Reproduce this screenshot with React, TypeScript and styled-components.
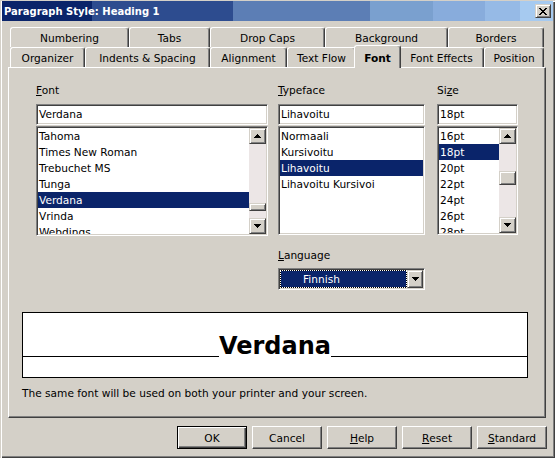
import styled, { createGlobalStyle, css } from "styled-components";

const GlobalStyle = createGlobalStyle`
  html, body {
    margin: 0;
    padding: 0;
    background: #d4d0c8;
  }
`;

const NAVY = "#0a246a";

const raised = css`
  box-sizing: border-box;
  border: 1px solid;
  border-color: #d4d0c8 #404040 #404040 #d4d0c8;
  box-shadow: inset 1px 1px 0 #ffffff, inset -1px -1px 0 #808080;
  background: #d4d0c8;
`;

const sunken = css`
  box-sizing: border-box;
  border: 1px solid;
  border-color: #808080 #ffffff #ffffff #808080;
  padding: 1px;
  box-shadow: inset 1px 1px 0 #404040, inset -1px -1px 0 #d4d0c8;
  background: #ffffff;
`;

const Window = styled.div`
  width: 555px;
  height: 458px;
  box-sizing: border-box;
  padding: 1px 2px 2px;
  background: #d4d0c8;
  box-shadow: inset 1px 1px 0 #d4d0c8, inset 2px 2px 0 #ffffff,
    inset -1px -1px 0 #404040, inset -2px -2px 0 #808080;
  display: flex;
  flex-direction: column;
  font-family: "DejaVu Sans", "Liberation Sans", sans-serif;
  font-size: 10.6px;
  color: #000;
  overflow: hidden;
`;

const TitleBar = styled.div`
  height: 20px;
  flex-shrink: 0;
  display: flex;
  align-items: center;
  justify-content: space-between;
  padding: 0 2px 0 2px;
  color: #fff;
  font-weight: bold;
  font-size: 10px;
  background: linear-gradient(
    to right,
    #0a246a 0 90px,
    #2d4c8f 90px 231px,
    #5c7eb5 231px 368px,
    #7aa0cf 368px 431px,
    #88acdc 431px 483px,
    #96bae6 483px 518px,
    #a6caf0 518px
  );
`;

const CloseButton = styled.div`
  ${raised};
  width: 16px;
  height: 14px;
  display: flex;
  align-items: center;
  justify-content: center;
`;

const TabStrip = styled.div`
  margin: 6px 0 0 8px;
  display: flex;
  flex-direction: column;
`;

const TabRow = styled.div`
  display: flex;
  height: 20px;
`;

const Tab = styled.div<{ $w: number; $active?: boolean }>`
  box-sizing: border-box;
  width: ${(p) => p.$w}px;
  height: 20px;
  flex-shrink: 0;
  display: flex;
  align-items: center;
  justify-content: center;
  padding-top: 1px;
  white-space: nowrap;
  background: #d4d0c8;
  border-top: 1px solid #ffffff;
  border-left: 1px solid #ffffff;
  border-right: 1px solid #404040;
  border-radius: 3px 3px 0 0;
  box-shadow: inset -1px 0 0 #808080;
  ${(p) =>
    p.$active &&
    css`
      width: ${p.$w + 4}px;
      height: 23px;
      margin: -2px -2px 0;
      position: relative;
      z-index: 1;
      font-weight: bold;
    `}
`;

const Page = styled.div`
  box-sizing: border-box;
  margin-left: 6px;
  width: 538px;
  height: 351px;
  flex-shrink: 0;
  border-top: 1px solid #ffffff;
  border-left: 1px solid #ffffff;
  border-right: 1px solid #404040;
  border-bottom: 1px solid #404040;
  box-shadow: inset -1px -1px 0 #808080;
  display: flex;
  flex-direction: column;
  padding: 14px 0 0 13px;
`;

const FieldsRow = styled.div`
  display: flex;
  align-items: flex-start;
  margin-left: 14px;
`;

const Column = styled.div<{ $w: number; $gap?: number }>`
  width: ${(p) => p.$w}px;
  margin-right: ${(p) => p.$gap ?? 0}px;
  display: flex;
  flex-direction: column;
`;

const Label = styled.div<{ $top?: number }>`
  height: 16px;
  line-height: 16px;
  margin-top: ${(p) => p.$top ?? 0}px;
`;

const TextField = styled.div`
  ${sunken};
  margin-top: 6px;
  height: 21px;
  line-height: 17px;
  padding-left: 2px;
  white-space: nowrap;
`;

const ListBox = styled.div<{ $h: number }>`
  ${sunken};
  margin-top: 1px;
  height: ${(p) => p.$h}px;
  display: flex;
  overflow: hidden;
`;

const Items = styled.div`
  flex: 1;
  min-width: 0;
  overflow: hidden;
  display: flex;
  flex-direction: column;
`;

const Item = styled.div<{ $sel?: boolean }>`
  height: 16px;
  line-height: 16px;
  flex-shrink: 0;
  padding-left: 1px;
  white-space: nowrap;
  background: ${(p) => (p.$sel ? NAVY : "transparent")};
  color: ${(p) => (p.$sel ? "#fff" : "#000")};
`;

const ScrollBar = styled.div`
  width: 17px;
  flex-shrink: 0;
  display: flex;
  flex-direction: column;
  background: #ece6e6;
`;

const ScrollArrow = styled.div`
  ${raised};
  height: 16px;
  flex-shrink: 0;
  display: flex;
  align-items: center;
  justify-content: center;
`;

const Track = styled.div<{ $offset: number }>`
  flex: 1;
  padding-top: ${(p) => p.$offset}px;
`;

const Thumb = styled.div<{ $h: number }>`
  ${raised};
  height: ${(p) => p.$h}px;
`;

const Dropdown = styled.div`
  ${sunken};
  margin-top: 5px;
  height: 22px;
  display: flex;
`;

const DropValue = styled.div`
  flex: 1;
  background: #000;
  display: flex;
`;

const DropFocus = styled.div`
  flex: 1;
  border: 1px dotted #ffffff;
  background: ${NAVY};
  background-clip: padding-box;
  color: #fff;
  line-height: 16px;
  padding-left: 22px;
`;

const DropButton = styled.div`
  ${raised};
  width: 16px;
  display: flex;
  align-items: center;
  justify-content: center;
`;

const PreviewBox = styled.div`
  box-sizing: border-box;
  margin-top: 22px;
  width: 506px;
  height: 66px;
  border: 1px solid #000;
  background: #fff;
`;

const PreviewRow = styled.div`
  display: flex;
  align-items: flex-end;
  height: 44px;
`;

const Rule = styled.div`
  flex: 1;
  height: 1px;
  background: #000;
`;

const PreviewWord = styled.div`
  font-family: "DejaVu Sans", sans-serif;
  font-weight: bold;
  font-size: 24px;
  line-height: 24px;
  margin-bottom: -1px;
`;

const Note = styled.div`
  margin-top: 7px;
  line-height: 16px;
`;

const ButtonBar = styled.div`
  margin-top: 8px;
  display: flex;
  justify-content: flex-end;
  gap: 5px;
  padding-right: 6px;
`;

const DialogButton = styled.div<{ $default?: boolean }>`
  box-sizing: border-box;
  width: 70px;
  height: 23px;
  display: flex;
  align-items: center;
  justify-content: center;
  border: 1px solid;
  border-color: #ffffff #404040 #404040 #ffffff;
  box-shadow: inset -1px -1px 0 #808080;
  ${(p) =>
    p.$default &&
    css`
      border-color: #000;
      box-shadow: inset 1px 1px 0 #ffffff, inset -1px -1px 0 #404040,
        inset -2px -2px 0 #808080;
    `}
`;

const Arrow = ({ down }: { down?: boolean }) => (
  <svg width="7" height="4" viewBox="0 0 7 4" shapeRendering="crispEdges">
    <g transform={down ? "matrix(1 0 0 -1 0 4)" : undefined} fill="#000">
      <rect x="3" y="0" width="1" height="1" />
      <rect x="2" y="1" width="3" height="1" />
      <rect x="1" y="2" width="5" height="1" />
      <rect x="0" y="3" width="7" height="1" />
    </g>
  </svg>
);

const CloseGlyph = () => (
  <svg width="8" height="7" viewBox="0 0 8 7" shapeRendering="crispEdges" fill="#000">
    <rect x="0" y="0" width="2" height="1" />
    <rect x="6" y="0" width="2" height="1" />
    <rect x="1" y="1" width="2" height="1" />
    <rect x="5" y="1" width="2" height="1" />
    <rect x="2" y="2" width="4" height="1" />
    <rect x="3" y="3" width="2" height="1" />
    <rect x="2" y="4" width="4" height="1" />
    <rect x="1" y="5" width="2" height="1" />
    <rect x="5" y="5" width="2" height="1" />
    <rect x="0" y="6" width="2" height="1" />
    <rect x="6" y="6" width="2" height="1" />
  </svg>
);

interface PickListProps {
  items: string[];
  selected: string;
  height: number;
  thumb?: { offset: number; size: number };
}

const PickList = ({ items, selected, height, thumb }: PickListProps) => (
  <ListBox $h={height}>
    <Items>
      {items.map((it) => (
        <Item key={it} $sel={it === selected}>
          {it}
        </Item>
      ))}
    </Items>
    {thumb && (
      <ScrollBar>
        <ScrollArrow>
          <Arrow />
        </ScrollArrow>
        <Track $offset={thumb.offset}>
          <Thumb $h={thumb.size} />
        </Track>
        <ScrollArrow>
          <Arrow down />
        </ScrollArrow>
      </ScrollBar>
    )}
  </ListBox>
);

const backTabs = [
  { label: "Numbering", w: 119 },
  { label: "Tabs", w: 81 },
  { label: "Drop Caps", w: 115 },
  { label: "Background", w: 123 },
  { label: "Borders", w: 96 },
];

const frontTabs = [
  { label: "Organizer", w: 75 },
  { label: "Indents & Spacing", w: 125 },
  { label: "Alignment", w: 77 },
  { label: "Text Flow", w: 69 },
  { label: "Font", w: 43, active: true },
  { label: "Font Effects", w: 85 },
  { label: "Position", w: 60 },
];

const fonts = ["Tahoma", "Times New Roman", "Trebuchet MS", "Tunga", "Verdana", "Vrinda", "Webdings"];
const faces = ["Normaali", "Kursivoitu", "Lihavoitu", "Lihavoitu Kursivoi"];
const sizes = ["16pt", "18pt", "20pt", "22pt", "24pt", "26pt", "28pt"];

export default function App() {
  return (
    <>
      <GlobalStyle />
      <Window>
        <TitleBar>
          <span>Paragraph Style: Heading 1</span>
          <CloseButton>
            <CloseGlyph />
          </CloseButton>
        </TitleBar>

        <TabStrip>
          <TabRow>
            {backTabs.map((t) => (
              <Tab key={t.label} $w={t.w}>
                {t.label}
              </Tab>
            ))}
          </TabRow>
          <TabRow>
            {frontTabs.map((t) => (
              <Tab key={t.label} $w={t.w} $active={t.active}>
                {t.label}
              </Tab>
            ))}
          </TabRow>
        </TabStrip>

        <Page>
          <FieldsRow>
            <Column $w={232} $gap={10}>
              <Label>
                <u>F</u>ont
              </Label>
              <TextField>Verdana</TextField>
              <PickList items={fonts} selected="Verdana" height={110} thumb={{ offset: 59, size: 8 }} />
            </Column>
            <Column $w={147} $gap={12}>
              <Label>
                <u>T</u>ypeface
              </Label>
              <TextField>Lihavoitu</TextField>
              <PickList items={faces} selected="Lihavoitu" height={109} />
              <Label $top={12}>
                <u>L</u>anguage
              </Label>
              <Dropdown>
                <DropValue>
                  <DropFocus>Finnish</DropFocus>
                </DropValue>
                <DropButton>
                  <Arrow down />
                </DropButton>
              </Dropdown>
            </Column>
            <Column $w={81}>
              <Label>
                Si<u>z</u>e
              </Label>
              <TextField>18pt</TextField>
              <PickList items={sizes} selected="18pt" height={109} thumb={{ offset: 27, size: 14 }} />
            </Column>
          </FieldsRow>

          <PreviewBox>
            <PreviewRow>
              <Rule />
              <PreviewWord>Verdana</PreviewWord>
              <Rule />
            </PreviewRow>
          </PreviewBox>
          <Note>The same font will be used on both your printer and your screen.</Note>
        </Page>

        <ButtonBar>
          <DialogButton $default>OK</DialogButton>
          <DialogButton>Cancel</DialogButton>
          <DialogButton>
            <u>H</u>elp
          </DialogButton>
          <DialogButton>
            <u>R</u>eset
          </DialogButton>
          <DialogButton>
            <u>S</u>tandard
          </DialogButton>
        </ButtonBar>
      </Window>
    </>
  );
}
